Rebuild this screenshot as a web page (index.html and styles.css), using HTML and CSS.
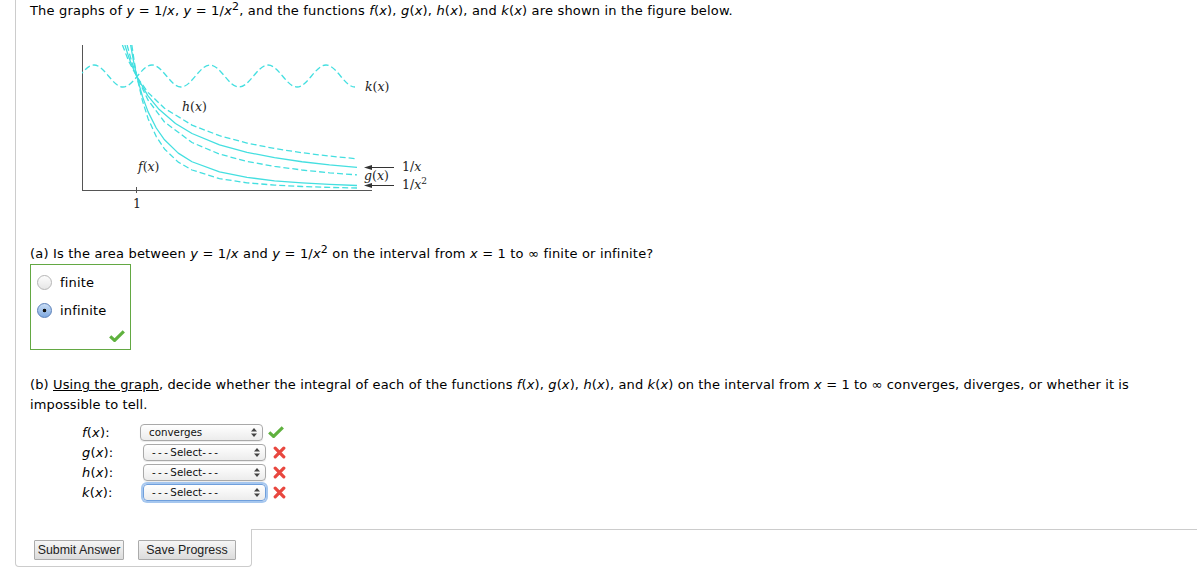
FILE: index.html
```html
<!DOCTYPE html>
<html>
<head>
<meta charset="utf-8">
<title>Problem</title>
<link rel="stylesheet" href="styles.css">
</head>
<body>
<div class="wrap">
  <div class="problem">
    <p class="intro">The graphs of <i>y</i> = 1/<i>x</i>, <i>y</i> = 1/<i>x</i><sup>2</sup>, and the functions <i>f</i>(<i>x</i>), <i>g</i>(<i>x</i>), <i>h</i>(<i>x</i>), and <i>k</i>(<i>x</i>) are shown in the figure below.</p>

    <svg class="figure" width="400" height="180" viewBox="30 35 400 180">
      <defs>
        <clipPath id="plotclip"><rect x="82" y="45" width="290" height="146"/></clipPath>
      </defs>
      <g class="axes">
        <line x1="82.5" y1="45" x2="82.5" y2="190.5"/>
        <line x1="82" y1="190.5" x2="372" y2="190.5"/>
        <line x1="136.5" y1="187" x2="136.5" y2="193"/>
      </g>
      <g clip-path="url(#plotclip)">
        <path class="curve dash" d="M65,87 C75.56,87 83.44,65 94,65 S112.44,87 123,87 S141.44,65 152,65 S170.44,87 181,87 S199.44,65 210,65 S228.44,87 239,87 S257.44,65 268,65 S286.44,87 297,87 S315.44,65 326,65 S344.44,87 355,87"/>
        <polyline class="curve dash" points="122.4,45 128.75,61.3 137,77 148,92.4 164.5,108.3 192,125.1 219.5,135.7 247,143.1 274.5,148.5 302,152.7 329.5,156.1 357,158.8"/>
        <polyline class="curve" points="124.9,45.1 128.75,57.1 131.5,64.4 137,77 148,95.8 159,109.3 175.5,123.5 192,133.5 219.5,144.8 247,152.3 274.5,157.7 302,161.75 329.5,164.9 357,167.4"/>
        <polyline class="curve dash" points="127.1,45 131.5,61.1 137,77 148,100 164.5,122 192,142.5 219.5,154.1 247,161.4 274.5,166.4 302,170 329.5,172.8 357,174.9"/>
        <polyline class="curve" points="130.6,45 133.7,62.1 137,77 142.5,96.6 148,111.6 156.25,128 164.5,139.8 178.25,153.1 192,161.75 219.5,171.9 247,177.4 274.5,180.8 302,182.9 329.5,184.4 357,185.5"/>
        <polyline class="curve dash" points="131.8,45 134.25,61.5 137,77 142.5,100.9 148,118.4 156.25,136.6 164.5,149 178.25,162.1 192,170 219.5,178.6 247,182.8 274.5,185.1 302,186.5 329.5,187.4 357,188"/>
      </g>
      <g class="arrows">
        <line x1="370" y1="167.5" x2="394" y2="167.5"/>
        <polygon points="364,167.5 372,165 372,170"/>
        <line x1="370" y1="185.5" x2="394" y2="185.5"/>
        <polygon points="364,185.5 372,183 372,188"/>
      </g>
      <g class="labels">
        <text x="365" y="91"><tspan class="it">k</tspan>(<tspan class="it">x</tspan>)</text>
        <text x="182" y="111"><tspan class="it">h</tspan>(<tspan class="it">x</tspan>)</text>
        <text x="138" y="171"><tspan class="it">f</tspan>(<tspan class="it">x</tspan>)</text>
        <text x="364" y="180"><tspan class="it">g</tspan>(<tspan class="it">x</tspan>)</text>
        <text x="402" y="171">1/<tspan class="it">x</tspan></text>
        <text x="402" y="189">1/<tspan class="it">x</tspan><tspan class="sup" dy="-5">2</tspan></text>
        <text x="133" y="208">1</text>
      </g>
    </svg>

    <p class="qa">(a) Is the area between <i>y</i> = 1/<i>x</i> and <i>y</i> = 1/<i>x</i><sup>2</sup> on the interval from <i>x</i> = 1 to ∞ finite or infinite?</p>
    <div class="radiobox">
      <div class="opt"><span class="radio"></span><span>finite</span></div>
      <div class="opt"><span class="radio on"></span><span>infinite</span></div>
      <svg class="check big" width="16" height="12" viewBox="0 0 16 12"><path d="M1.2,6.3 L5.6,10.4 L14.8,1.4"/></svg>
    </div>

    <p class="qb">(b) <span class="link">Using the graph</span>, decide whether the integral of each of the functions <i>f</i>(<i>x</i>), <i>g</i>(<i>x</i>), <i>h</i>(<i>x</i>), and <i>k</i>(<i>x</i>) on the interval from <i>x</i> = 1 to ∞ converges, diverges, or whether it is impossible to tell.</p>

    <div class="rows">
      <div class="row">
        <span class="lbl"><i>f</i>(<i>x</i>):</span>
        <span class="select first"><span>converges</span><svg class="arr" width="6" height="9" viewBox="0 0 6 9"><polygon points="3,0 6,3.5 0,3.5"/><polygon points="0,5.5 6,5.5 3,9"/></svg></span>
        <svg class="check" width="16" height="12" viewBox="0 0 16 12"><path d="M1.2,6.3 L5.6,10.4 L14.8,1.4"/></svg>
      </div>
      <div class="row">
        <span class="lbl"><i>g</i>(<i>x</i>):</span>
        <span class="select"><span><span class="dashes">---</span>Select<span class="dashes">---</span></span><svg class="arr" width="6" height="9" viewBox="0 0 6 9"><polygon points="3,0 6,3.5 0,3.5"/><polygon points="0,5.5 6,5.5 3,9"/></svg></span>
        <svg class="cross" width="13" height="13" viewBox="0 0 13 13"><path d="M2.2,2.2 L10.8,10.8 M10.8,2.2 L2.2,10.8"/></svg>
      </div>
      <div class="row">
        <span class="lbl"><i>h</i>(<i>x</i>):</span>
        <span class="select"><span><span class="dashes">---</span>Select<span class="dashes">---</span></span><svg class="arr" width="6" height="9" viewBox="0 0 6 9"><polygon points="3,0 6,3.5 0,3.5"/><polygon points="0,5.5 6,5.5 3,9"/></svg></span>
        <svg class="cross" width="13" height="13" viewBox="0 0 13 13"><path d="M2.2,2.2 L10.8,10.8 M10.8,2.2 L2.2,10.8"/></svg>
      </div>
      <div class="row">
        <span class="lbl"><i>k</i>(<i>x</i>):</span>
        <span class="select focus"><span><span class="dashes">---</span>Select<span class="dashes">---</span></span><svg class="arr" width="6" height="9" viewBox="0 0 6 9"><polygon points="3,0 6,3.5 0,3.5"/><polygon points="0,5.5 6,5.5 3,9"/></svg></span>
        <svg class="cross" width="13" height="13" viewBox="0 0 13 13"><path d="M2.2,2.2 L10.8,10.8 M10.8,2.2 L2.2,10.8"/></svg>
      </div>
    </div>
  </div>

  <div class="footer">
    <div class="tab">
      <button class="btn submit">Submit Answer</button>
      <button class="btn save">Save Progress</button>
    </div>
    <div class="fill"></div>
  </div>
</div>
</body>
</html>
```

FILE: styles.css
```css
html, body {
  margin: 0;
  padding: 0;
  background: #fff;
}
body {
  font-family: "DejaVu Sans", Verdana, sans-serif;
  font-size: 13px;
  letter-spacing: 0.18px;
  color: #000;
}
.wrap {
  margin-left: 15px;
}
.problem {
  border-left: 1px solid #cccccc;
  padding: 1px 0 27px 14px;
}
p {
  margin: 0;
  line-height: 20px;
}
sup {
  font-size: 0.85em;
  line-height: 0;
  vertical-align: 0.45em;
}
.qb {
  letter-spacing: 0.12px;
}
.figure {
  display: block;
  margin-top: 14px;
  letter-spacing: 0;
}
.axes line {
  stroke: #555;
  stroke-width: 1;
}
.curve {
  fill: none;
  stroke: #44dfe0;
  stroke-width: 1.3;
  stroke-linejoin: round;
}
.curve.dash {
  stroke-dasharray: 6 3;
}
.arrows line {
  stroke: #333;
  stroke-width: 1;
}
.arrows polygon {
  fill: #333;
}
.labels text {
  font-family: "DejaVu Serif", "Liberation Serif", serif;
  font-size: 12.5px;
  fill: #222;
}
.labels .it {
  font-style: italic;
}
.labels .sup {
  font-size: 9px;
}
.qa {
  margin-top: 29px;
}
.radiobox {
  width: 99px;
  border: 1px solid #63a843;
  display: flex;
  flex-direction: column;
  padding: 7px 0 7px 0;
}
.opt {
  display: flex;
  align-items: center;
  height: 20px;
  margin-bottom: 8px;
}
.opt + .opt {
  margin-bottom: 0;
}
.radio {
  width: 13px;
  height: 13px;
  border-radius: 50%;
  border: 1px solid #b5b5b5;
  background: linear-gradient(#fdfdfd, #e6e6e6);
  margin: 0 8px 0 6px;
  box-sizing: content-box;
}
.radio.on {
  border-color: #5a7fb8;
  background: radial-gradient(circle at 50% 50%, #111 0, #111 1.6px, transparent 2.1px), linear-gradient(#c9ddf5, #7fa9e0);
}
.check {
  fill: none;
  stroke: #5fb13e;
  stroke-width: 3.2;
}
.check.big {
  align-self: flex-end;
  margin: 10px 5px 0 0;
}
.qb {
  margin-top: 25px;
}
.link {
  text-decoration: underline;
}
.rows {
  margin-top: 7px;
  margin-left: 52px;
}
.row {
  display: flex;
  align-items: center;
  height: 20px;
}
.lbl {
  width: 61px;
}
.select {
  width: 108px;
  height: 15px;
  border: 1px solid #a9a9a9;
  border-radius: 4px;
  background: linear-gradient(#ffffff, #ececec);
  box-shadow: 0 1px 1px rgba(0, 0, 0, 0.08);
  display: flex;
  align-items: center;
  justify-content: space-between;
  padding: 0 5px 0 8px;
  font-size: 10.3px;
  letter-spacing: 0;
  color: #111;
  margin-right: 7px;
}
.select .dashes {
  letter-spacing: 2.4px;
}
.select.first {
  margin-left: -3px;
  margin-right: 5px;
}
.select.focus {
  border-color: #6f9fdc;
  box-shadow: 0 0 0 2px #a6c7ef;
}
.arr polygon {
  fill: #444;
}
.cross {
  fill: none;
  stroke: #e8473f;
  stroke-width: 3.2;
  stroke-linecap: round;
}
.footer {
  display: flex;
}
.tab {
  border: 1px solid #cccccc;
  border-top: none;
  border-radius: 0 0 4px 4px;
  padding: 11px 15px 6px 18px;
  display: flex;
  gap: 14px;
}
.fill {
  flex: 1;
  border-top: 1px solid #cccccc;
}
.btn {
  font-family: "Liberation Sans", Arial, sans-serif;
  font-size: 12.4px;
  letter-spacing: 0;
  box-sizing: border-box;
  height: 20px;
  padding: 0;
  margin: 0;
  border: 1px solid #ababab;
  border-radius: 1px;
  background: linear-gradient(#f6f6f6, #dcdcdc);
  color: #222;
  line-height: 18px;
  text-align: center;
}
.btn.submit {
  width: 90px;
}
.btn.save {
  width: 98px;
}
```
